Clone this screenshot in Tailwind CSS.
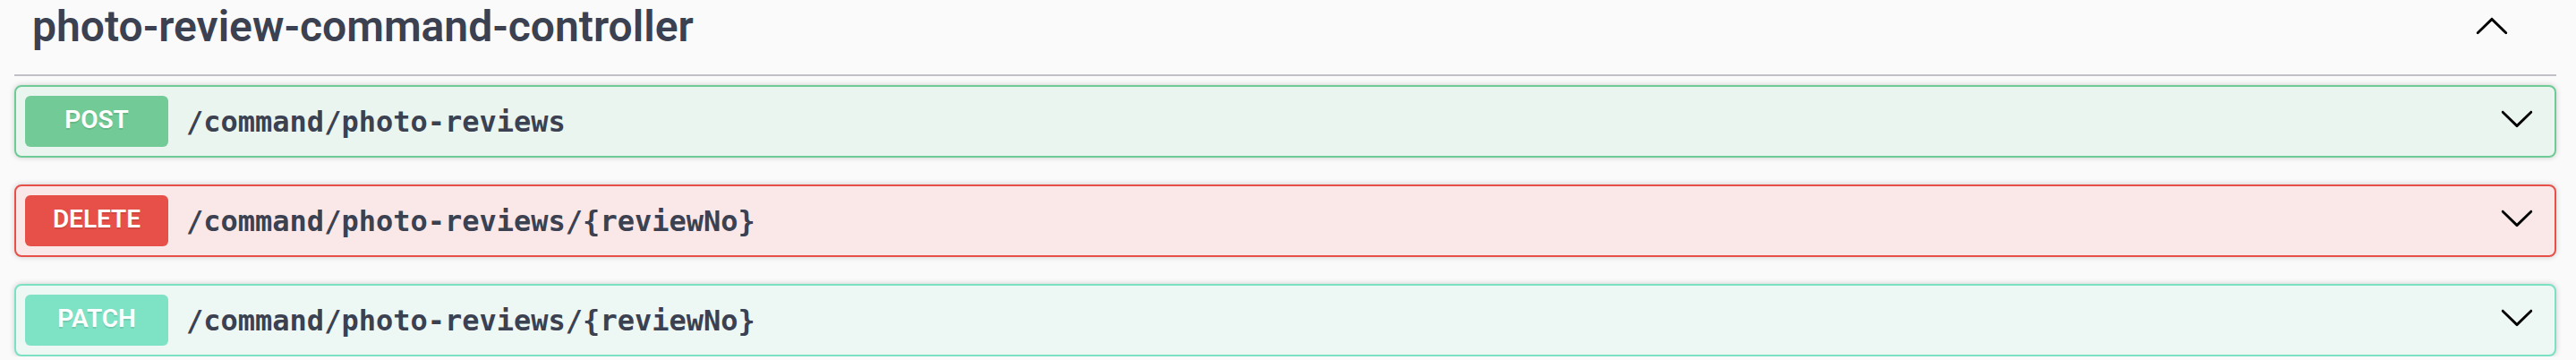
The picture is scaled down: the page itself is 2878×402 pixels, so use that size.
<!DOCTYPE html>
<html lang="en">
<head>
<meta charset="utf-8">
<title>photo-review-command-controller</title>
<script src="https://cdn.jsdelivr.net/npm/@tailwindcss/browser@4"></script>
</head>
<body class="bg-[#fafafa] text-[#3b4151] font-[Roboto,sans-serif]">
<svg class="hidden" aria-hidden="true">
  <symbol id="chevron" viewBox="0 0 20 20">
    <path d="M17.418 6.109c.272-.268.709-.268.979 0s.271.701 0 .969l-7.908 7.83c-.27.268-.707.268-.979 0l-7.908-7.83c-.27-.268-.27-.701 0-.969.271-.268.709-.268.979 0L10 13.25z"/>
  </symbol>
</svg>
<main class="pl-4 pr-[22px]">
  <h3 class="border-b-2 border-[#c1c0c7]">
    <button type="button" aria-expanded="true" class="flex w-full items-start justify-between pl-5 pr-[52px] pb-[23px] text-left">
      <span class="text-5xl leading-[60px] font-semibold">photo-review-command-controller</span>
      <svg class="mt-[10px] size-10 rotate-180 fill-black" aria-hidden="true"><use href="#chevron"/></svg>
    </button>
  </h3>
  <div class="flex flex-col gap-[30px] pt-[10px]">
    <button type="button" class="flex w-full items-center gap-5 rounded-lg border-2 border-[#6fcb95] bg-[#ebf5f0] p-[10px] pr-[22px] text-left shadow-[0_0_6px_rgba(0,0,0,0.19)]">
      <span class="w-40 shrink-0 rounded-md bg-[#72cb96] pt-[7px] pb-[10px] text-center text-[28px] leading-10 font-semibold text-white [text-shadow:0_2px_0_rgba(0,0,0,0.1)]">POST</span>
      <span class="grow font-['DejaVu_Sans_Mono',monospace] text-[32px] leading-10 font-bold">/command/photo-reviews</span>
      <svg class="mb-2 size-10 shrink-0 fill-black" aria-hidden="true"><use href="#chevron"/></svg>
    </button>
    <button type="button" class="flex w-full items-center gap-5 rounded-lg border-2 border-[#e65048] bg-[#f9e8e7] p-[10px] pr-[22px] text-left shadow-[0_0_6px_rgba(0,0,0,0.19)]">
      <span class="w-40 shrink-0 rounded-md bg-[#e65048] pt-[7px] pb-[10px] text-center text-[28px] leading-10 font-semibold text-white [text-shadow:0_2px_0_rgba(0,0,0,0.1)]">DELETE</span>
      <span class="grow font-['DejaVu_Sans_Mono',monospace] text-[32px] leading-10 font-bold">/command/photo-reviews/{reviewNo}</span>
      <svg class="mb-2 size-10 shrink-0 fill-black" aria-hidden="true"><use href="#chevron"/></svg>
    </button>
    <button type="button" class="flex w-full items-center gap-5 rounded-lg border-2 border-[#7ce1c3] bg-[#edf7f4] p-[10px] pr-[22px] text-left shadow-[0_0_6px_rgba(0,0,0,0.19)]">
      <span class="w-40 shrink-0 rounded-md bg-[#7ee2c5] pt-[7px] pb-[10px] text-center text-[28px] leading-10 font-semibold text-white [text-shadow:0_2px_0_rgba(0,0,0,0.1)]">PATCH</span>
      <span class="grow font-['DejaVu_Sans_Mono',monospace] text-[32px] leading-10 font-bold">/command/photo-reviews/{reviewNo}</span>
      <svg class="mb-2 size-10 shrink-0 fill-black" aria-hidden="true"><use href="#chevron"/></svg>
    </button>
  </div>
</main>
</body>
</html>
